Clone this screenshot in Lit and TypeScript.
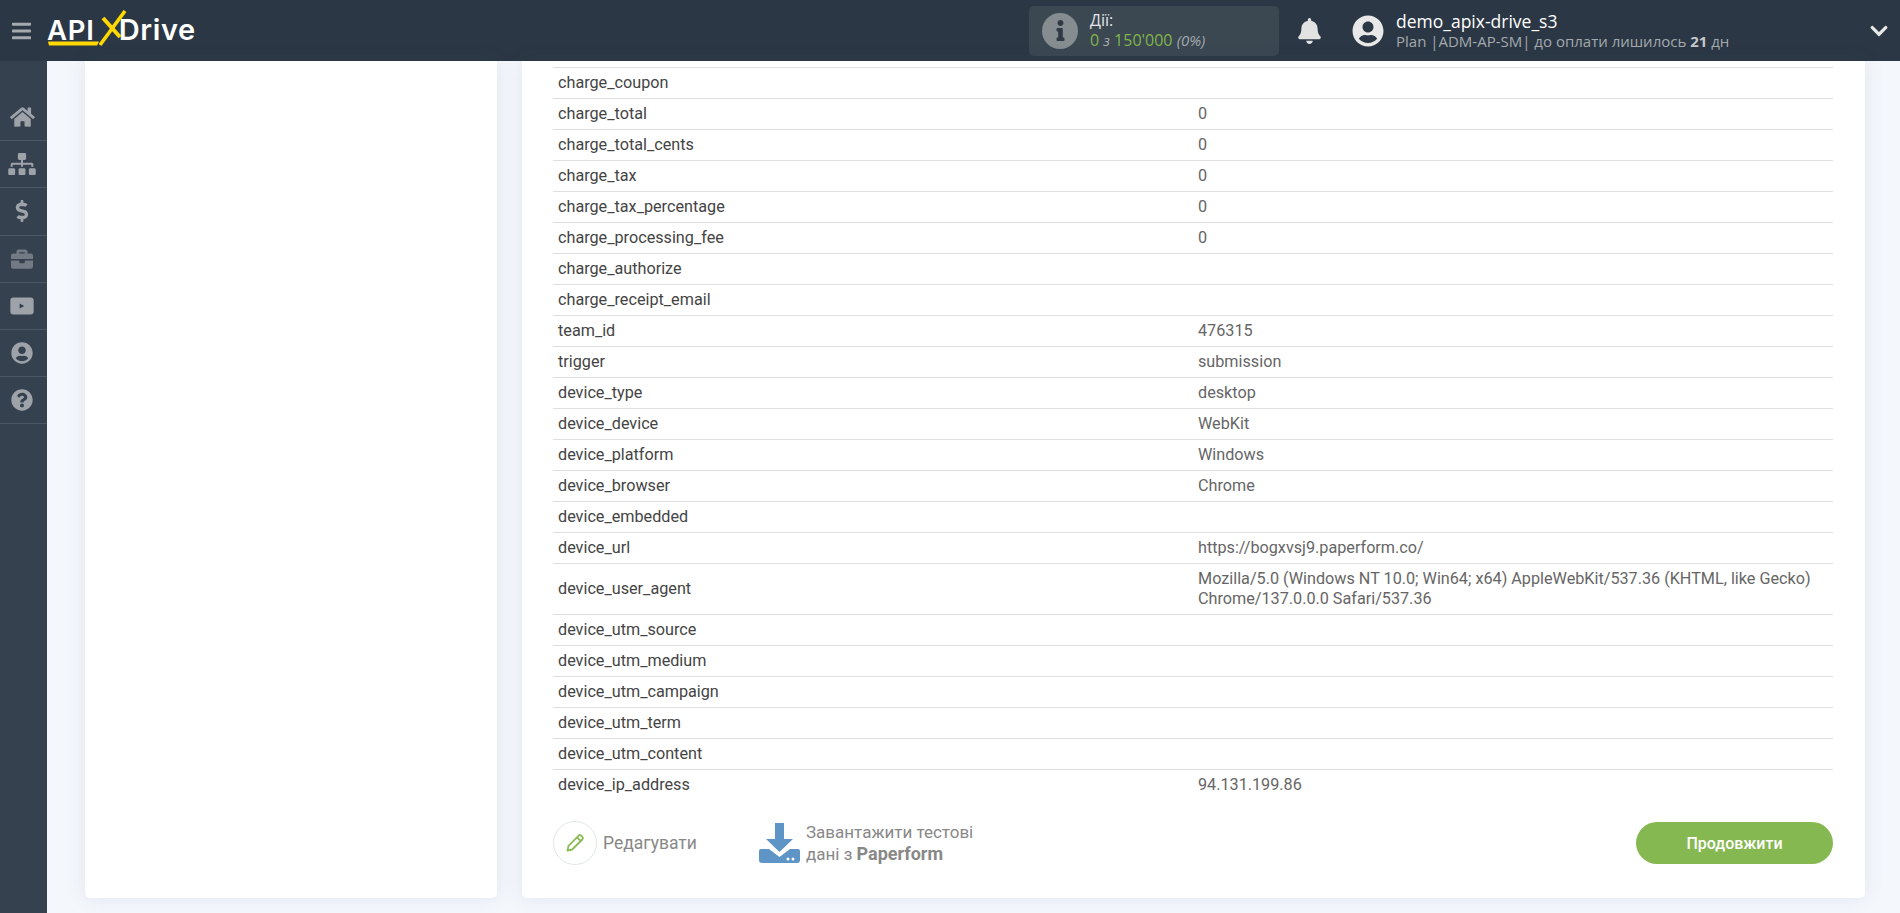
import { LitElement, html, css, svg } from "lit";
import { customElement } from "lit/decorators.js";

const P = {
  bars: ["0 0 448 512", "M16 132h416c8.837 0 16-7.163 16-16V76c0-8.837-7.163-16-16-16H16C7.163 60 0 67.163 0 76v40c0 8.837 7.163 16 16 16zm0 160h416c8.837 0 16-7.163 16-16v-40c0-8.837-7.163-16-16-16H16c-8.837 0-16 7.163-16 16v40c0 8.837 7.163 16 16 16zm0 160h416c8.837 0 16-7.163 16-16v-40c0-8.837-7.163-16-16-16H16c-8.837 0-16 7.163-16 16v40c0 8.837 7.163 16 16 16z"],
  home: ["0 0 576 512", "M280.37 148.26L96 300.11V464a16 16 0 0 0 16 16l112.06-.29a16 16 0 0 0 15.92-16V368a16 16 0 0 1 16-16h64a16 16 0 0 1 16 16v95.64a16 16 0 0 0 16 16.05L464 480a16 16 0 0 0 16-16V300L295.67 148.26a12.19 12.19 0 0 0-15.3 0zM571.6 251.47L488 182.56V44.05a12 12 0 0 0-12-12h-56a12 12 0 0 0-12 12v72.61L318.47 43a48 48 0 0 0-61 0L4.34 251.47a12 12 0 0 0-1.6 16.9l25.5 31A12 12 0 0 0 45.15 301l235.22-193.74a12.19 12.19 0 0 1 15.3 0L530.9 301a12 12 0 0 0 16.9-1.6l25.5-31a12 12 0 0 0-1.7-16.93z"],
  sitemap: ["0 0 640 512", "M128 352H32c-17.67 0-32 14.33-32 32v96c0 17.67 14.33 32 32 32h96c17.67 0 32-14.33 32-32v-96c0-17.67-14.33-32-32-32zm-24-80h192v48h48v-48h192v48h48v-57.59c0-21.17-17.23-38.41-38.41-38.41H344v-64h40c17.67 0 32-14.33 32-32V32c0-17.67-14.33-32-32-32H256c-17.67 0-32 14.33-32 32v96c0 17.67 14.33 32 32 32h40v64H94.41C73.23 224 56 241.23 56 262.41V320h48v-48zm264 80h-96c-17.67 0-32 14.33-32 32v96c0 17.67 14.33 32 32 32h96c17.67 0 32-14.33 32-32v-96c0-17.67-14.33-32-32-32zm240 0h-96c-17.67 0-32 14.33-32 32v96c0 17.67 14.33 32 32 32h96c17.67 0 32-14.33 32-32v-96c0-17.67-14.33-32-32-32z"],
  dollar: ["0 0 288 512", "M209.2 233.4l-108-31.6C88.7 198.2 80 186.5 80 173.5c0-16.3 13.2-29.5 29.5-29.5h66.3c12.2 0 24.2 3.7 34.2 10.5 6.1 4.1 14.3 3.1 19.5-2l34.8-34c7.1-6.9 6.1-18.4-1.8-24.5C238 74.8 207.4 64.1 176 64V16c0-8.8-7.2-16-16-16h-32c-8.8 0-16 7.2-16 16v48h-2.5C45.8 64-5.4 118.7.5 183.6c4.2 46.1 39.4 83.6 83.8 96.6l102.5 30c12.5 3.7 21.2 15.3 21.2 28.3 0 16.3-13.2 29.5-29.5 29.5h-66.3C100 368 88 364.3 78 357.5c-6.1-4.1-14.3-3.1-19.5 2l-34.8 34c-7.1 6.9-6.1 18.4 1.8 24.5 24.5 19.2 55.1 29.9 86.5 30v48c0 8.8 7.2 16 16 16h32c8.8 0 16-7.2 16-16v-48.2c46.6-.9 90.3-28.6 105.7-72.7 21.5-61.6-14.6-124.8-72.5-141.7z"],
  briefcase: ["0 0 512 512", "M320 336c0 8.84-7.16 16-16 16h-96c-8.84 0-16-7.16-16-16v-48H0v144c0 25.6 22.4 48 48 48h416c25.6 0 48-22.4 48-48V288H320v48zm144-208h-80V80c0-25.6-22.4-48-48-48H176c-25.6 0-48 22.4-48 48v48H48c-25.6 0-48 22.4-48 48v80h512v-80c0-25.6-22.4-48-48-48zm-144 0H192V96h128v32z"],
  video: ["0 0 576 512", "M90 70H486C520 70 546 96 546 130V382C546 416 520 442 486 442H90C56 442 30 416 30 382V130C30 96 56 70 90 70ZM235 200V312L340 256Z"],
  user: ["0 0 496 512", "M248 8C111 8 0 119 0 256s111 248 248 248 248-111 248-248S385 8 248 8zm0 96c48.6 0 88 39.4 88 88s-39.4 88-88 88-88-39.4-88-88 39.4-88 88-88zm0 344c-58.7 0-111.3-26.6-146.5-68.2 18.8-35.4 55.6-59.8 98.5-59.8 2.4 0 4.8.4 7.1 1.1 13 4.2 26.6 6.9 40.9 6.9 14.3 0 28-2.7 40.9-6.9 2.3-.7 4.7-1.1 7.1-1.1 42.9 0 79.7 24.4 98.5 59.8C359.3 421.4 306.7 448 248 448z"],
  question: ["0 0 512 512", "M504 256c0 136.997-111.043 248-248 248S8 392.997 8 256C8 119.083 119.043 8 256 8s248 111.083 248 248zM262.655 90c-54.497 0-89.255 22.957-116.549 63.758-3.536 5.286-2.353 12.415 2.715 16.258l34.699 26.31c5.205 3.947 12.621 3.008 16.665-2.122 17.864-22.658 30.113-35.797 57.303-35.797 20.429 0 45.698 13.148 45.698 32.958 0 14.976-12.363 22.667-32.534 33.976C247.128 238.528 216 254.941 216 296v4c0 6.627 5.373 12 12 12h56c6.627 0 12-5.373 12-12v-1.333c0-28.462 83.186-29.647 83.186-106.667 0-58.002-60.165-102-116.531-102zM256 338c-25.365 0-46 20.635-46 46 0 25.364 20.635 46 46 46s46-20.636 46-46c0-25.365-20.635-46-46-46z"],
  bell: ["0 0 448 512", "M224 512c35.32 0 63.97-28.65 63.97-64H160.03c0 35.35 28.65 64 63.97 64zm215.39-149.71c-19.32-20.76-55.47-51.99-55.47-154.29 0-77.7-54.48-139.9-127.94-155.16V32c0-17.67-14.32-32-31.98-32s-31.98 14.33-31.98 32v20.84C118.56 68.1 64.08 130.3 64.08 208c0 102.3-36.15 133.53-55.47 154.29-6 6.45-8.66 14.16-8.61 21.71.11 16.4 12.98 32 32.1 32h383.8c19.12 0 32-15.6 32.1-32 .05-7.55-2.61-15.27-8.61-21.71z"],
  chevron: ["0 0 448 512", "M207.029 381.476L12.686 187.132c-9.373-9.373-9.373-24.569 0-33.941l22.667-22.667c9.357-9.357 24.522-9.375 33.901-.04L224 284.505l154.745-154.021c9.379-9.335 24.544-9.317 33.901.04l22.667 22.667c9.373 9.373 9.373 24.569 0 33.941L240.971 381.476c-9.373 9.372-24.569 9.372-33.942 0z"],
  info: ["0 0 192 512", "M20 424.229h20V279.771H20c-11.046 0-20-8.954-20-20V212c0-11.046 8.954-20 20-20h112c11.046 0 20 8.954 20 20v212.229h20c11.046 0 20 8.954 20 20V492c0 11.046-8.954 20-20 20H20c-11.046 0-20-8.954-20-20v-47.771c0-11.046 8.954-20 20-20zM96 0C56.235 0 24 32.235 24 72s32.235 72 72 72 72-32.235 72-72S135.764 0 96 0z"],
} as const;

const icon = (k: keyof typeof P, cls: string) =>
  html`<svg class=${cls} viewBox=${P[k][0]} fill="currentColor"><path d=${P[k][1]}></path></svg>`;

const ROWS: [string, string][] = [
  ["charge_coupon", ""],
  ["charge_total", "0"],
  ["charge_total_cents", "0"],
  ["charge_tax", "0"],
  ["charge_tax_percentage", "0"],
  ["charge_processing_fee", "0"],
  ["charge_authorize", ""],
  ["charge_receipt_email", ""],
  ["team_id", "476315"],
  ["trigger", "submission"],
  ["device_type", "desktop"],
  ["device_device", "WebKit"],
  ["device_platform", "Windows"],
  ["device_browser", "Chrome"],
  ["device_embedded", ""],
  ["device_url", "https://bogxvsj9.paperform.co/"],
  ["device_user_agent", "Mozilla/5.0 (Windows NT 10.0; Win64; x64) AppleWebKit/537.36 (KHTML, like Gecko) Chrome/137.0.0.0 Safari/537.36"],
  ["device_utm_source", ""],
  ["device_utm_medium", ""],
  ["device_utm_campaign", ""],
  ["device_utm_term", ""],
  ["device_utm_content", ""],
  ["device_ip_address", "94.131.199.86"],
];

const NAV: [keyof typeof P, string][] = [
  ["home", "n-home"],
  ["sitemap", "n-site"],
  ["dollar", "n-dollar"],
  ["briefcase", "n-case"],
  ["video", "n-video"],
  ["user", "n-user"],
  ["question", "n-q"],
];

@customElement("app-root")
export class AppRoot extends LitElement {
  static styles = css`
    :host { display: block; width: 1900px; height: 913px; overflow: hidden; background: #f4f7fc; font-family: "Roboto", sans-serif; }
    svg { display: block; }
    .top { height: 61px; background: #2b3744; display: flex; align-items: center; color: #fff; font-family: "Open Sans", sans-serif; }
    .burger { width: 19px; height: 22px; margin-left: 12px; color: #a5aaaf; flex: none; }
    .logo { position: relative; display: flex; align-items: baseline; flex: none; width: 160px; height: 40px; margin-left: 16px; margin-top: -2px; font-family: "Inter", sans-serif; font-weight: 600; font-size: 27.5px; line-height: 40px; color: #fff; }
    .logo .api { letter-spacing: 0.8px; }
    .logo .x { width: 24px; flex: none; }
    .logo .drive { font-size: 29px; letter-spacing: 0.6px; }
    .logo svg { position: absolute; left: 0; top: 0; }
    .stat { margin-left: 822px; width: 250px; height: 50px; box-sizing: border-box; background: #3b4751; border-radius: 5px; display: flex; align-items: center; padding-left: 13px; flex: none; }
    .stat-i { width: 36px; height: 36px; border-radius: 50%; background: #868d91; display: flex; align-items: center; justify-content: center; color: #2f3a45; flex: none; }
    .stat-i svg { width: 9px; height: 21px; }
    .stat-t { margin-left: 12px; margin-top: -2px; font-size: 16px; line-height: 20px; color: #e4e6e8; }
    .stat-n { color: #82b54b; font-size: 16px; white-space: nowrap; }
    .stat-n em { color: #a4aaae; font-size: 15px; }
    .bell { width: 23px; height: 26px; margin-left: 19px; color: #e2e2e2; flex: none; }
    .ava { width: 32px; height: 32px; margin-left: 31px; color: #e8e8e8; flex: none; }
    .who { margin-left: 12px; white-space: nowrap; }
    .who b { display: block; font-weight: 400; font-size: 17.5px; line-height: 22px; color: #fff; }
    .who span { display: block; font-size: 15px; line-height: 19px; color: #a4aaae; }
    .who strong { font-weight: 700; color: #c4c8cb; }
    .chev { width: 18px; height: 20px; margin-left: auto; margin-right: 12px; color: #e8e8e8; flex: none; }
    .body { display: flex; height: 852px; }
    .side { width: 47px; flex: none; background: #35414f; padding-top: 33px; box-sizing: border-box; }
    .nav { height: 47.2px; padding-right: 3px; border-bottom: 1px solid #4b5663; box-sizing: border-box; display: flex; align-items: center; justify-content: center; color: #9ea3a9; }
    .n-home { width: 25px; height: 22px; }
    .n-site { width: 28px; height: 22px; }
    .n-dollar { width: 14px; height: 22px; }
    .n-case { width: 22px; height: 22px; color: #737a84; }
    .n-video { width: 26px; height: 24px; }
    .n-user { width: 22px; height: 22px; }
    .n-q { width: 22px; height: 22px; }
    .main { flex: 1; display: flex; gap: 25px; padding: 0 35px 15px 38px; min-width: 0; }
    .card { background: #fff; border-radius: 0 0 5px 5px; box-shadow: 0 0 20px rgba(60, 80, 120, 0.1); }
    .left { width: 412px; flex: none; }
    .right { flex: 1; padding: 6px 32px 0 31px; min-width: 0; }
    .row { display: grid; grid-template-columns: 640px 1fr; align-items: center; min-height: 31px; padding: 5px; box-sizing: border-box; border-top: 1px solid #dfdfdf; font-size: 16.2px; line-height: 20px; }
    .row:last-of-type { border-bottom: 1px solid #dfdfdf; }
    .row .k { color: #444; }
    .row .v { color: #666; }
    .foot { display: flex; align-items: center; margin-top: 21px; }
    .edit { width: 44px; height: 44px; box-sizing: border-box; border: 1px solid #dfe8e4; border-radius: 50%; display: flex; align-items: center; justify-content: center; flex: none; }
    .edit svg { width: 20px; height: 20px; }
    .edit-t { margin-left: 6px; font-size: 17.5px; color: #888; width: 156px; flex: none; }
    .dl { width: 41px; height: 40px; flex: none; }
    .dl-t { margin-left: 6px; font-size: 17px; line-height: 21px; color: #888; }
    .dl-t b { font-size: 18px; }
    .go { margin-left: auto; width: 197px; height: 42px; border-radius: 21px; background: #86b851; color: #fff; display: flex; align-items: center; justify-content: center; font-size: 16px; font-weight: 500; }
  `;

  render() {
    return html`
      <div class="top">
        ${icon("bars", "burger")}
        <div class="logo">
          <span class="api">API</span><span class="x"></span><span class="drive">Drive</span>
          <svg width="160" height="40" viewBox="0 0 160 40">
            ${svg`<path d="M1 31.5H49L52 31.5L50 35.5H2Z" fill="#ffd800"></path>
            <path d="M56 8L73 27" stroke="#ffd800" stroke-width="4" fill="none"></path>
            <path d="M53 35L78 1" stroke="#ffd800" stroke-width="3.6" fill="none"></path>`}
          </svg>
        </div>
        <div class="stat">
          <div class="stat-i">${icon("info", "")}</div>
          <div class="stat-t">Дії:<br /><span class="stat-n">0 <em>з</em> 150'000 <em>(0%)</em></span></div>
        </div>
        ${icon("bell", "bell")}
        ${icon("user", "ava")}
        <div class="who">
          <b>demo_apix-drive_s3</b>
          <span>Plan |ADM-AP-SM| до оплати лишилось <strong>21</strong> дн</span>
        </div>
        ${icon("chevron", "chev")}
      </div>
      <div class="body">
        <div class="side">
          ${NAV.map(([k, c]) => html`<div class="nav">${icon(k, c)}</div>`)}
        </div>
        <div class="main">
          <div class="card left"></div>
          <div class="card right">
            ${ROWS.map(([k, v]) => html`<div class="row"><div class="k">${k}</div><div class="v">${v}</div></div>`)}
            <div class="foot">
              <div class="edit">
                <svg viewBox="0 0 24 24" fill="none" stroke="#8bbb55" stroke-width="2.2" stroke-linejoin="round">
                  <path d="M3 21l1.2-5.6L16.5 3.1a2 2 0 0 1 2.8 0l1.6 1.6a2 2 0 0 1 0 2.8L8.6 19.8Z"></path>
                  <path d="M14.5 5.2l4.3 4.3"></path>
                </svg>
              </div>
              <div class="edit-t">Редагувати</div>
              <svg class="dl" viewBox="0 0 41 40">
                <path d="M16 0H25V16H34L20.5 29L7 16H16Z" fill="#5e94c6"></path>
                <path d="M0 28a2 2 0 0 1 2-2H10L20.5 34L31 26H39a2 2 0 0 1 2 2V37a3 3 0 0 1-3 3H3a3 3 0 0 1-3-3Z" fill="#5e94c6"></path>
                <circle cx="29" cy="36" r="1.5" fill="#fff"></circle>
                <circle cx="34" cy="36" r="1.5" fill="#fff"></circle>
              </svg>
              <div class="dl-t">Завантажити тестові<br />дані з <b>Paperform</b></div>
              <div class="go">Продовжити</div>
            </div>
          </div>
        </div>
      </div>
    `;
  }
}
